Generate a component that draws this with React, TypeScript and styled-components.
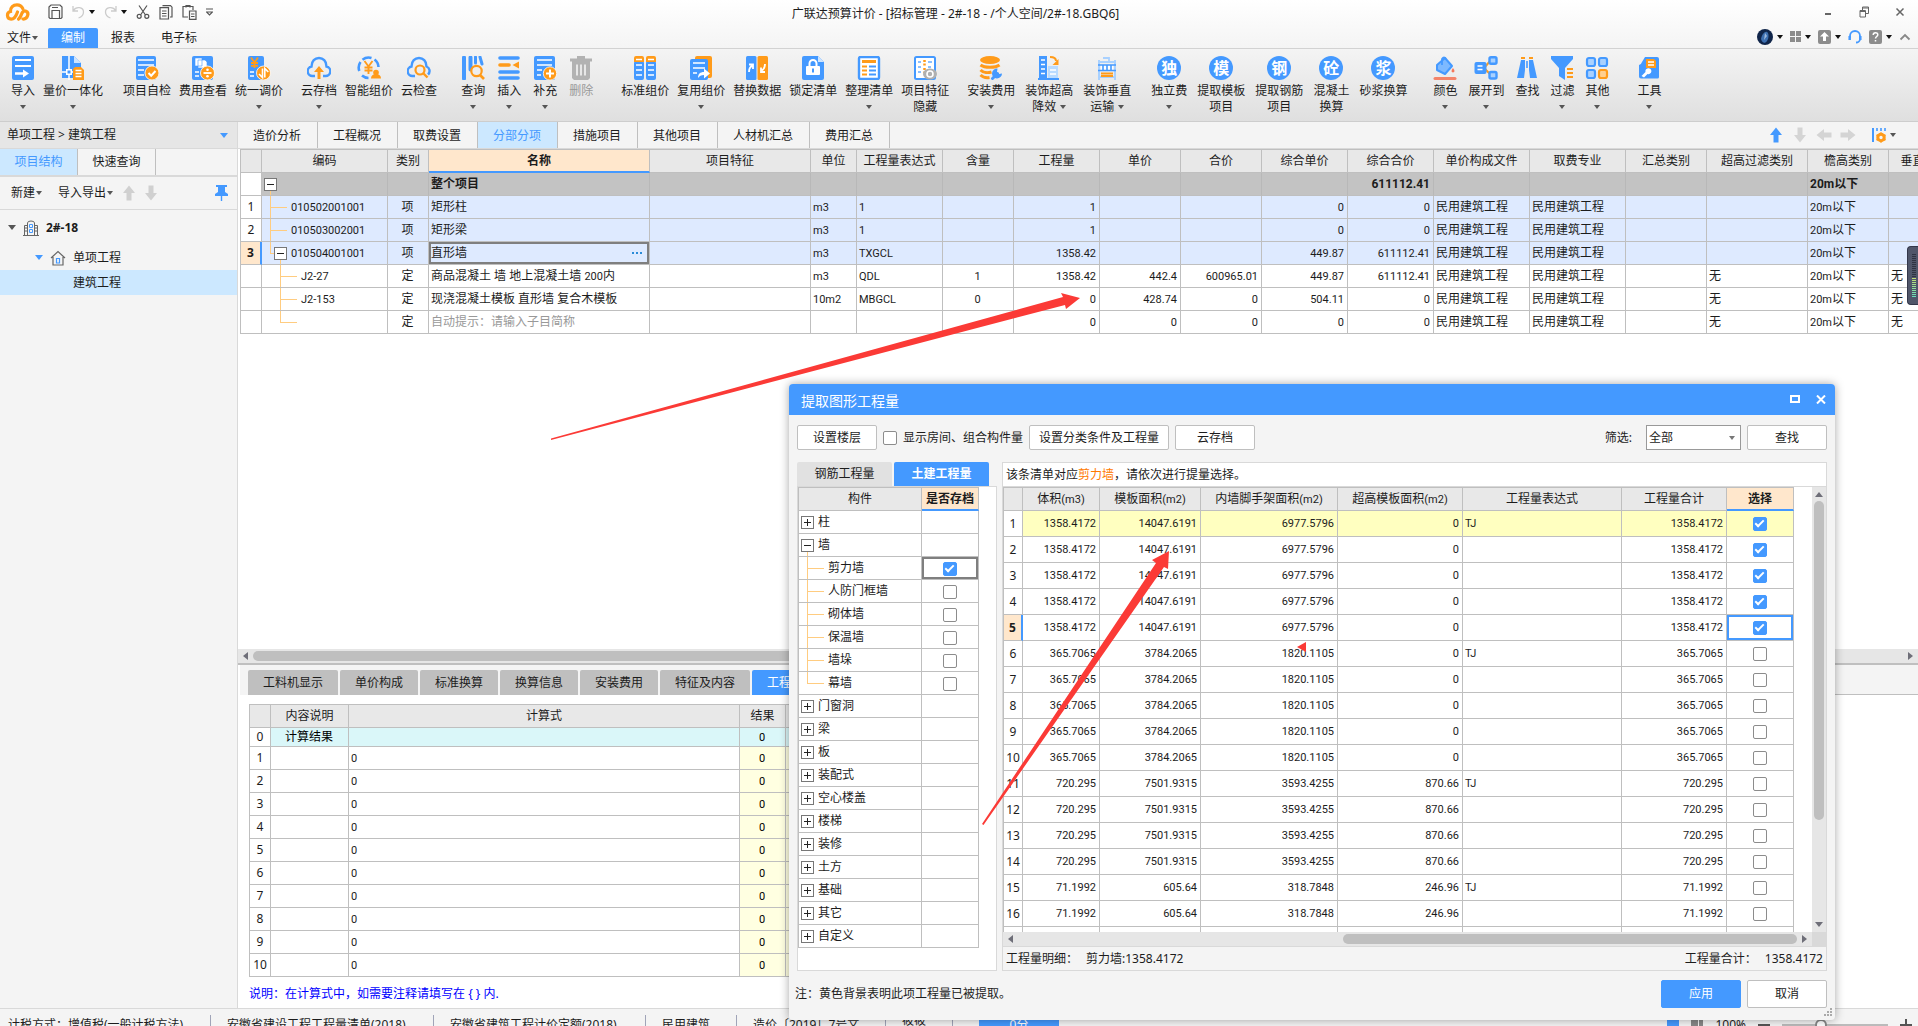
import React from "react";
import styled, { createGlobalStyle, css } from "styled-components";

const BLUE = "#4499ff";
const ORANGE = "#ff9b1a";
const LINE = "#bfbfbf";
const SOFT = "#d9d9d9";
const PEACH = "#ffe7cc";
const SKY = "#cce8ff";
const PANEL = "#f4f4f4";

const GlobalStyle = createGlobalStyle`
  *, *::before, *::after { box-sizing: border-box; }
  body { margin: 0; overflow: hidden; }
  body, button, input, select, table {
    font-family: "Noto Sans", "Noto Sans CJK SC", sans-serif;
    font-size: 12px;
    line-height: 16px;
    color: #1c1c1c;
  }
  button { border: 0; padding: 0; background: none; white-space: nowrap; }
  svg { display: block; flex: none; }
`;

/* ---------- shared pieces ---------- */

const caretSizes = { small: [3, 4], medium: [4, 5], large: [5, 6] };

const Caret = styled.span<{
  $color?: string;
  $size?: "small" | "medium" | "large";
  $dir?: "down" | "left" | "right" | "up";
}>`
  flex: none;
  width: 0;
  height: 0;
  ${({ $color = "#555", $size = "small", $dir = "down" }) => {
    const [a, b] = caretSizes[$size];
    const side = { down: "top", up: "bottom", left: "right", right: "left" }[$dir];
    const cross = $dir === "down" || $dir === "up" ? ["left", "right"] : ["top", "bottom"];
    return css`
      border-${cross[0]}: ${a}px solid transparent;
      border-${cross[1]}: ${a}px solid transparent;
      border-${side}: ${b}px solid ${$color};
    `;
  }}
`;

const Latin = styled.span`
  font-family: Roboto, sans-serif;
  font-size: 11px;
`;

function mixed(text: string) {
  return text
    .split(/([\x21-\x7e]+)/)
    .filter(Boolean)
    .map((part, i) => (/^[\x21-\x7e]/.test(part) ? <Latin key={i}>{part}</Latin> : part));
}

const Check = styled.input.attrs({ type: "checkbox" })`
  appearance: none;
  flex: none;
  display: inline-grid;
  place-content: center;
  width: 14px;
  height: 14px;
  margin: 0;
  border: 1px solid #8c8c8c;
  border-radius: 2px;
  background: #fff;
  vertical-align: middle;
  &:checked {
    border-color: ${BLUE};
    background: ${BLUE};
  }
  &:checked::before {
    content: "";
    width: 9px;
    height: 5px;
    margin-bottom: 3px;
    border-left: 2px solid #fff;
    border-bottom: 2px solid #fff;
    transform: rotate(-45deg);
  }
`;

const Arrow = ({ dir, color }: { dir: number; color: string }) => (
  <svg width="16" height="16" viewBox="0 0 16 16">
    <path d="M8 0.500L14 8h-3.500v7.500h-5V8H2z" fill={color} transform={`rotate(${dir} 8 8)`} />
  </svg>
);

/* ---------- title bar ---------- */

const Page = styled.div`
  position: relative;
  display: flex;
  flex-direction: column;
  height: 100vh;
  overflow: hidden;
  background: #fff;
`;

const Head = styled.header`
  background: linear-gradient(#fff, #f4f4f4);
  border-bottom: 1px solid #d2d2d2;
`;

const TitleRow = styled.div`
  display: grid;
  grid-template-columns: 1fr auto 1fr;
  align-items: center;
  height: 28px;
  padding: 0 12px 0 5px;
`;

const QuickBar = styled.div`
  display: flex;
  align-items: center;
  gap: 9px;
  height: 24px;
  align-self: start;
`;

const Logo = styled.svg`
  margin-right: 8px;
`;

const Title = styled.h1`
  margin: 0;
  font-size: 12px;
  font-weight: 400;
`;

const WindowButtons = styled.div`
  display: flex;
  justify-content: flex-end;
  align-items: center;
  align-self: start;
  gap: 24px;
  height: 24px;
`;

const MenuRow = styled.div`
  display: flex;
  height: 20px;
  padding-right: 7px;
`;

const MenuButton = styled.button<{ $active?: boolean }>`
  padding: 0 13px;
  height: 20px;
  border-radius: 2px 2px 0 0;
  ${({ $active }) => $active && `background: ${BLUE}; color: #fff;`}
`;

const FileButton = styled.button`
  display: flex;
  align-items: center;
  gap: 1px;
  width: 48px;
  padding-left: 7px;
`;

const Tray = styled.div`
  display: flex;
  align-items: center;
  gap: 7px;
  margin-left: auto;
  height: 18px;
`;

const TrayPair = styled.button`
  display: flex;
  align-items: center;
  gap: 4px;
`;

const QuickIcon = styled.button`
  display: flex;
  align-items: center;
  gap: 4px;
`;

const stroke = { fill: "none", stroke: "#555", strokeWidth: 1.2 } as const;

function Header() {
  return (
    <Head>
      <TitleRow>
        <QuickBar>
          <Logo width="26" height="20" viewBox="0 0 26 20" fill="none" stroke={ORANGE} strokeWidth="3.200" strokeLinecap="round">
            <path d="M12.500 10c-1.500 4.500-3 7.200-6.300 7.200a3.900 3.900 0 0 1-.7-7.700C5.200 5.500 8.200 2.800 12 2.800c2.800 0 4.800 1.500 5.800 3.800" />
            <path d="M13.500 17.200c1.800-1.200 2.300-3.200 3.300-5.700 1-2.200 2.300-3 4.200-2.300 1.800.8 2.300 2.600 1.600 4.600-.8 2.200-2.600 3.400-4.600 3.200" />
          </Logo>
          <QuickIcon aria-label="保存">
            <svg width="15" height="16" viewBox="0 0 15 16" {...stroke}>
              <path d="M1 3l2-2h9l2 2v10.500l-1 1H2l-1-1zM4 14V6.500h7.500V14M4 3.500h6" />
            </svg>
          </QuickIcon>
          <QuickIcon aria-label="撤销">
            <svg width="13" height="14" viewBox="0 0 13 14" fill="none" stroke="#ccc" strokeWidth="1.300">
              <path d="M1 1v5h5M1.500 5.500C4 1 11.500 2 11.500 7c0 3-2 5-5 6" />
            </svg>
            <Caret $color="#111" />
          </QuickIcon>
          <QuickIcon aria-label="重做">
            <svg width="13" height="14" viewBox="0 0 13 14" fill="none" stroke="#ccc" strokeWidth="1.300">
              <path d="M12 1v5H7M11.500 5.500C9 1 1.500 2 1.500 7c0 3 2 5 5 6" />
            </svg>
            <Caret $color="#111" />
          </QuickIcon>
          <QuickIcon aria-label="剪切">
            <svg width="14" height="14" viewBox="0 0 14 14" {...stroke}>
              <path d="M3 0.500l6.500 9.500M11 0.500L4.500 10" />
              <circle cx="3.200" cy="11.300" r="2" />
              <circle cx="10.800" cy="11.300" r="2" />
            </svg>
          </QuickIcon>
          <QuickIcon aria-label="复制">
            <svg width="14" height="15" viewBox="0 0 14 15" {...stroke}>
              <path d="M3.500 0.700h8l1.500 1.500V12h-2M1 2.700h8.500V14H1zM3 6h4.500M3 8.500h4.500M3 11h4.500" />
            </svg>
          </QuickIcon>
          <QuickIcon aria-label="粘贴">
            <svg width="15" height="16" viewBox="0 0 15 16" {...stroke}>
              <path d="M6 13H1V2.500h10V6M4 3.500v-2h4v2M7.500 7h6.500v8.300H7.500zM9 10h3.500M9 12.500h3.500" />
            </svg>
          </QuickIcon>
          <QuickIcon aria-label="更多">
            <svg width="7" height="8" viewBox="0 0 7 8" {...stroke}>
              <path d="M0 1h7M0.500 4h6L3.500 7z" />
            </svg>
          </QuickIcon>
        </QuickBar>
        <Title>广联达预算计价 - [招标管理 - 2#-18 - /个人空间/2#-18.GBQ6]</Title>
        <WindowButtons>
          <button aria-label="最小化">
            <svg width="12" height="12" viewBox="0 0 12 12"><path d="M3 7h6v2H3z" fill="#666" /></svg>
          </button>
          <button aria-label="还原">
            <svg width="12" height="12" viewBox="0 0 12 12" fill="none" stroke="#666">
              <path d="M4.500 4V1h6v6.500h-3M2 4.500h5.500V11H2zM4.500 2h6M2 5.500h5.500" />
            </svg>
          </button>
          <button aria-label="关闭">
            <svg width="12" height="12" viewBox="0 0 12 12" stroke="#666" strokeWidth="1.500"><path d="M2.500 2.500l7 7M9.500 2.500l-7 7" /></svg>
          </button>
        </WindowButtons>
      </TitleRow>
      <MenuRow>
        <FileButton>文件<Caret /></FileButton>
        <MenuButton $active>编制</MenuButton>
        <MenuButton>报表</MenuButton>
        <MenuButton>电子标</MenuButton>
        <Tray>
          <TrayPair aria-label="账户">
            <svg width="16" height="16" viewBox="0 0 16 16">
              <circle cx="8" cy="8" r="8" fill="#10254a" />
              <path d="M4 10c1-5 4-8 6-7s2 6 0 9-5 2-6-2z" fill="#3d6fb0" />
              <path d="M8 4l2 3-3 4z" fill="#9db8dc" />
            </svg>
            <Caret $color="#111" />
          </TrayPair>
          <TrayPair aria-label="布局">
            <svg width="11" height="12" viewBox="0 0 11 12" fill="#8c8c8c"><path d="M0 0h5v5H0zM6 0h5v5H6zM0 6h5v5H0zM6 6h5v5H6z" /></svg>
            <Caret $color="#111" />
          </TrayPair>
          <TrayPair aria-label="上传">
            <svg width="13" height="14" viewBox="0 0 13 14">
              <rect width="13" height="14" rx="2" fill="#8c8c8c" />
              <path d="M6.500 2L11 6.500H8V11H5V6.500H2z" fill="#fff" />
            </svg>
            <Caret $color="#111" />
          </TrayPair>
          <button aria-label="客服">
            <svg width="14" height="14" viewBox="0 0 14 14" fill="none" stroke={BLUE} strokeWidth="1.800">
              <path d="M2 8V6a5 5 0 0 1 10 0v3c0 2-2 3.500-4 3.500" />
              <path d="M1.700 6v4M12.300 6v4" strokeWidth="2.500" />
            </svg>
          </button>
          <TrayPair aria-label="帮助">
            <svg width="13" height="14" viewBox="0 0 13 14">
              <rect width="13" height="14" rx="2" fill="#8c8c8c" />
              <path d="M4.200 5c0-3 4.600-3 4.600-.3 0 1.800-2.300 1.800-2.300 3.800M6.500 10v1.500" fill="none" stroke="#fff" strokeWidth="1.500" />
            </svg>
            <Caret $color="#111" />
          </TrayPair>
          <button aria-label="收起">
            <svg width="12" height="12" viewBox="0 0 12 12" fill="none" stroke="#888" strokeWidth="1.800"><path d="M1.500 8.500L6 4l4.500 4.500" /></svg>
          </button>
        </Tray>
      </MenuRow>
    </Head>
  );
}

/* ---------- ribbon ---------- */

const RibbonBar = styled.nav`
  display: flex;
  align-items: flex-start;
  height: 73px;
  padding: 7px 0 0 11px;
  background: linear-gradient(#f4f4f4, #dfdfdf);
  border-bottom: 1px solid #cdcdcd;
`;

const RibbonGroup = styled.div<{ $gap: number; $lead: number }>`
  display: flex;
  gap: ${({ $gap }) => $gap}px;
  margin-left: ${({ $lead }) => $lead}px;
`;

const RibbonButton = styled.button<{ $muted?: boolean }>`
  display: flex;
  flex-direction: column;
  align-items: center;
  color: ${({ $muted }) => ($muted ? "#999" : "#1c1c1c")};
`;

const RibbonLabel = styled.span`
  margin-top: 3px;
`;

const RibbonFoot = styled.span`
  display: flex;
  align-items: center;
  gap: 4px;
  height: 16px;
`;

const Disc = styled.span`
  display: grid;
  place-content: center;
  width: 24px;
  height: 24px;
  border-radius: 50%;
  background: ${BLUE};
  color: #fff;
  font-size: 16px;
  font-weight: 700;
  line-height: 24px;
`;

const B = BLUE;
const O = ORANGE;
const art: Record<string, React.ReactNode> = {
  import: (
    <>
      <rect x="1" width="22" height="24" rx="2" fill={B} />
      <path d="M4 4h16M4 10h16" stroke="#fff" strokeWidth="2" />
      <path d="M4 17.500h9" stroke="#fff" strokeWidth="2.500" />
      <path d="M12 13.500l6 4-6 4z" fill="#fff" />
    </>
  ),
  integrate: (
    <>
      <path d="M1 0h12l7 7v15H1z" fill={B} />
      <path d="M13 0l7 7h-7z" fill="#cce4ff" />
      <path d="M8 0v24M1 16h13" stroke="#fff" strokeWidth="1.500" />
      <path d="M5 13h6v6H5z" fill="#fff" />
      <path d="M6.500 14.500h3v3h-3z" fill={B} />
      <path d="M14 11h6l3 3v10H12V13z" fill={O} />
      <path d="M14.500 14.500h6M14.500 17.500h6M14.500 20.500h6" stroke="#fff" strokeWidth="1.500" />
    </>
  ),
  selfcheck: (
    <>
      <rect x="1" width="20" height="24" rx="2" fill={B} />
      <path d="M3 4h16M3 9h16M3 19h6M3 14h6" stroke="#fff" strokeWidth="1.600" />
      <circle cx="17" cy="17" r="7" fill={O} stroke="#fff" strokeWidth="0.800" />
      <path d="M13.500 17l2.700 2.700L20.500 15" fill="none" stroke="#fff" strokeWidth="2" />
    </>
  ),
  fee: (
    <>
      <rect x="1" width="21" height="24" rx="2" fill={B} />
      <path d="M4 2h7v8H4zM7 4h7l2 2v6H7z" fill="#fff" stroke={B} strokeWidth="0.600" />
      <path d="M4 16h4M4 20h4" stroke="#fff" strokeWidth="1.600" />
      <circle cx="16.500" cy="17" r="7" fill={O} stroke="#fff" strokeWidth="0.800" />
      <path d="M12.500 17h8" stroke="#fff" strokeWidth="1.800" />
      <circle cx="16.500" cy="13.800" r="1.300" fill="#fff" />
      <circle cx="16.500" cy="20.200" r="1.300" fill="#fff" />
    </>
  ),
  unify: (
    <>
      <rect x="1" width="16" height="24" rx="2" fill={B} />
      <path d="M4 1.500l3.500 5 3.500-5M7.500 6v6M4 7h7M4 9.800h7" fill="none" stroke={O} strokeWidth="1.800" />
      <path d="M3 16h4M3 20h4" stroke="#fff" strokeWidth="1.600" />
      <circle cx="16.500" cy="17" r="7" fill={O} stroke="#fff" strokeWidth="0.800" />
      <path d="M15.500 12.500v9l-3.500-3.500M17.800 21.500v-9l3.500 3.500" fill="none" stroke="#fff" strokeWidth="1.600" />
    </>
  ),
  cloudup: (
    <>
      <path d="M8 20H5.500A4.800 4.800 0 0 1 4.500 10.500C4.500 5 8 2 12 2s7.500 3 7.500 8.500A4.800 4.800 0 0 1 18.500 20H16" fill="none" stroke={B} strokeWidth="2.400" />
      <path d="M12 10l5 6h-3.500v7h-3v-7H7z" fill={O} />
    </>
  ),
  smart: (
    <>
      <path d="M2.300 15A10 10 0 0 1 3.500 6M5.500 3.700A10 10 0 0 1 14.500 2M17.500 3.500A10 10 0 0 1 21.500 11M5 19.500a10 10 0 0 0 6.500 2.500" fill="none" stroke={B} strokeWidth="2.600" />
      <path d="M7.500 5l4 5.500 4-5.500M11.500 10v8M7.500 11.500h8M7.500 14.500h8" fill="none" stroke={O} strokeWidth="1.900" />
      <circle cx="19" cy="16.500" r="2.800" fill={O} />
      <path d="M14 22.500c0-3 2-4.500 5-4.500s5 1.500 5 4.500z" fill={O} />
    </>
  ),
  cloudcheck: (
    <>
      <path d="M8 20H5.500A4.800 4.800 0 0 1 4.500 10.500C4.500 5 8 2 12 2s7.500 3 7.500 8.500a4.800 4.800 0 0 1 1.500 8" fill="none" stroke={B} strokeWidth="2.400" />
      <circle cx="13" cy="14" r="4.500" fill="none" stroke={O} strokeWidth="2.200" />
      <path d="M16.500 17.500l4 4" stroke={O} strokeWidth="2.400" />
    </>
  ),
  query: (
    <>
      <path d="M3 1.500v21M9.500 1.500v12" stroke={B} strokeWidth="4" strokeLinecap="round" />
      <path d="M14.500 1v6M19 1l2 7" stroke={B} strokeWidth="3" strokeLinecap="round" />
      <circle cx="15.500" cy="15" r="5.200" fill="#eee" stroke={O} strokeWidth="2.200" />
      <path d="M19 19l4 4" stroke={O} strokeWidth="2.600" />
    </>
  ),
  insert: (
    <>
      <path d="M3 2h18M3 16h18M3 22h18" stroke={B} strokeWidth="3.600" strokeLinecap="round" />
      <path d="M3 9h9" stroke={O} strokeWidth="3.600" strokeLinecap="round" />
      <path d="M22 5.500v7L15.500 9z" fill={O} />
    </>
  ),
  add: (
    <>
      <rect x="1" width="21" height="24" rx="2" fill={B} />
      <path d="M4 4h15M4 9h15M4 14h5M4 19h4" stroke="#fff" strokeWidth="1.600" />
      <circle cx="17" cy="17.500" r="6.700" fill={O} stroke="#fff" strokeWidth="0.800" />
      <path d="M13 17.500h8M17 13.500v8" stroke="#fff" strokeWidth="2" />
    </>
  ),
  trash: (
    <>
      <path d="M1 4h22M8 1.500h8" stroke="#b2b2b2" strokeWidth="3" />
      <path d="M3 5h18v17l-2 2H5l-2-2z" fill="#b2b2b2" />
      <path d="M8 8.500v11M12 8.500v11M16 8.500v11" stroke="#f4f4f4" strokeWidth="1.600" />
    </>
  ),
  standard: (
    <>
      <rect x="1" y="5" width="10" height="19" rx="2" fill={B} />
      <rect x="13" y="5" width="10" height="19" rx="2" fill={B} />
      <path d="M1 2q0-2 2-2h6q2 0 2 2v4H1zM13 2q0-2 2-2h6q2 0 2 2v4H13z" fill={O} />
      <path d="M3 3.500h6M15 3.500h6M3 9h6M3 14h6M3 19h6M15 9h6M15 14h6M15 19h6" stroke="#fff" strokeWidth="1.600" />
    </>
  ),
  reuse: (
    <>
      <rect x="6" width="17" height="22" rx="2" fill={O} />
      <rect x="1" y="3" width="18" height="21" rx="2" fill={B} />
      <path d="M4 7h12M4 12h12M4 17h4" stroke="#fff" strokeWidth="1.600" />
      <path d="M9 22c0-4 2-6 6-6v-3.500l6 5-6 5V19c-3 0-4.500 1-6 3z" fill="#fff" />
    </>
  ),
  swap: (
    <>
      <rect x="1" width="10.500" height="24" rx="1.500" fill={B} />
      <rect x="12.500" width="10.500" height="24" rx="1.500" fill={O} />
      <path d="M4 16c0-3 1-5 3-6.500M4 8.500h4v4.500" fill="none" stroke="#fff" strokeWidth="1.800" />
      <path d="M20 8c0 3-1 5-3 6.500M20 16h-4v-4.500" fill="none" stroke="#fff" strokeWidth="1.800" />
    </>
  ),
  lock: (
    <>
      <path d="M1 2q0-2 2-2h14l6 6v16q0 2-2 2H3q-2 0-2-2z" fill={B} />
      <path d="M17 0l6 6h-6z" fill="#cce4ff" />
      <rect x="5" y="10" width="14" height="9" rx="1" fill="#fff" />
      <path d="M8.500 10V7.500a3.500 3.500 0 0 1 7 0V10" fill="none" stroke="#fff" strokeWidth="2" />
      <path d="M12 12.500v4" stroke={B} strokeWidth="2" />
    </>
  ),
  tidy: (
    <>
      <rect x="2" y="1" width="20" height="22" rx="1.500" fill="#fff" stroke={B} strokeWidth="2.400" />
      <path d="M5 5.500h14" stroke={O} strokeWidth="3" />
      <path d="M5 10.500h5M5 14.500h5M5 18.500h5" stroke={O} strokeWidth="2" />
      <path d="M12 10.500h7M12 14.500h7M12 18.500h7" stroke={B} strokeWidth="2" />
    </>
  ),
  feature: (
    <>
      <rect x="2" y="1" width="20" height="22" rx="1.500" fill="#fff" stroke={B} strokeWidth="2" />
      <path d="M5 6h3M5 11h3M5 16h3M15 6h4M15 11h3" stroke="#8cc0ff" strokeWidth="2" />
      <path d="M11.500 4v6M11.500 12v5" stroke={O} strokeWidth="2.500" strokeDasharray="2 1.500" />
      <ellipse cx="17" cy="18" rx="7" ry="5.500" fill="#b0b0b0" />
      <circle cx="17" cy="18" r="3" fill="none" stroke="#fff" strokeWidth="1.600" />
    </>
  ),
  install: (
    <>
      <ellipse cx="11" cy="4" rx="10" ry="4" fill={O} />
      <path d="M1.500 9c4 3 15 3 19 0M1.500 14c3 3 8 3 11 2M1.500 19c3 3 6 3 9 2.500" fill="none" stroke={O} strokeWidth="3" />
      <path d="M13.500 22.500l5-5" stroke={B} strokeWidth="3" strokeLinecap="round" />
      <path d="M18.500 12.500a5 5 0 1 0 4.500 5l-3 .5-2-2z" fill={B} />
    </>
  ),
  superhigh: (
    <>
      <path d="M2 0h8v24H2z" fill={B} />
      <path d="M4 4h4M4 8.500h4M4 13h4M4 17.500h4" stroke="#fff" strokeWidth="1.500" />
      <path d="M11 10h10v13H11z" fill="#b9dbff" />
      <path d="M13 14h6M13 18h6" stroke="#fff" strokeWidth="1.500" />
      <path d="M1 23h21" stroke={B} strokeWidth="2" />
      <path d="M13 1c4 0 6 2 6 4" fill="none" stroke={O} strokeWidth="2" />
      <path d="M21.500 3v6h-6z" fill={O} />
    </>
  ),
  vertical: (
    <>
      <path d="M4 4v20M20 4v20M4 6h16M4 21h16" stroke="#a9d1ff" strokeWidth="2" />
      <path d="M8 2h6v4" fill="none" stroke="#a9d1ff" strokeWidth="1.800" />
      <path d="M6 9h12v6H6z" fill="#fff" />
      <path d="M3 9h18M3 14.500h18M8 9v6M12 9v6M16 9v6" stroke={B} strokeWidth="1.600" />
      <path d="M6 17.500h12M6 20h12" stroke={O} strokeWidth="1.800" />
    </>
  ),
  color: (
    <>
      <path d="M4 9l8-7 7 8-7 8-8-4z" fill="#7db9ff" stroke={B} strokeWidth="2" strokeLinejoin="round" />
      <path d="M9 9V3q2-3 4 0" fill="none" stroke={B} strokeWidth="1.800" />
      <path d="M20 12c2 2.500 2 4 0 4.500-2-.5-2-2 0-4.500z" fill="#f4775a" />
      <path d="M2 22.500h20" stroke="#f4846a" strokeWidth="3" strokeLinecap="round" />
    </>
  ),
  expand: (
    <>
      <path d="M10 12l7-8M10 12l7 7" stroke={O} strokeWidth="2" />
      <rect x="0.500" y="6" width="12" height="12" rx="2" fill={B} />
      <path d="M3.500 10h5M3.500 13.500h5" stroke="#fff" strokeWidth="1.500" />
      <rect x="15.500" y="1.200" width="7" height="6.500" rx="1.500" fill="#a9d1ff" stroke={B} strokeWidth="2.400" />
      <rect x="15.500" y="16" width="7" height="6.500" rx="1.500" fill="#a9d1ff" stroke={B} strokeWidth="2.400" />
    </>
  ),
  find: (
    <>
      <path d="M6 4h4v10l-1 8H2zM14 4h4l4 18h-7l-1-8z" fill={B} />
      <path d="M6 2h4M14 2h4" stroke={O} strokeWidth="2" />
      <path d="M12 5v7" stroke={B} strokeWidth="1.600" />
    </>
  ),
  filter: (
    <>
      <path d="M1 0h22v3l-8 9v12l-6-4v-8L1 3z" fill={B} />
      <path d="M17 13h6M17 17h6M17 21h6" stroke={O} strokeWidth="2" />
    </>
  ),
  other: (
    <>
      {[[2, 2, B, "#a9d1ff"], [14, 2, B, "#a9d1ff"], [2, 14, B, "#a9d1ff"], [14, 14, O, "#ffcf8f"]].map(([x, y, s, f]) => (
        <rect key={`${x}-${y}`} x={x} y={y} width="8" height="8" rx="2" fill={f as string} stroke={s as string} strokeWidth="2.200" />
      ))}
    </>
  ),
  tool: (
    <>
      <path d="M2 9q2 0 3-3l3-5h12q2 0 2 2v18q0 1.500-1.500 1.500H4q-2 0-2-2z" fill={B} />
      <path d="M9 3h8l2 2v7H9z" fill={O} />
      <path d="M11 6h6M11 9h6" stroke="#fff" strokeWidth="1.400" />
      <path d="M4.500 20l4-4a3 3 0 1 1 2 2L7 21.500z" fill="#fff" />
    </>
  ),
};

type RibbonItem = { label: string; icon: string; caret?: boolean; foot?: string; muted?: boolean };
const ribbon: { gap: number; lead: number; items: RibbonItem[] }[] = [
  { gap: 8, lead: 0, items: [
    { label: "导入", icon: "import", caret: true },
    { label: "量价一体化", icon: "integrate", caret: true },
  ] },
  { gap: 8, lead: 20, items: [
    { label: "项目自检", icon: "selfcheck" },
    { label: "费用查看", icon: "fee" },
    { label: "统一调价", icon: "unify", caret: true },
  ] },
  { gap: 8, lead: 18, items: [
    { label: "云存档", icon: "cloudup", caret: true },
    { label: "智能组价", icon: "smart" },
    { label: "云检查", icon: "cloudcheck" },
  ] },
  { gap: 12, lead: 24, items: [
    { label: "查询", icon: "query", caret: true },
    { label: "插入", icon: "insert", caret: true },
    { label: "补充", icon: "add", caret: true },
    { label: "删除", icon: "trash", muted: true },
  ] },
  { gap: 8, lead: 28, items: [
    { label: "标准组价", icon: "standard" },
    { label: "复用组价", icon: "reuse", caret: true },
    { label: "替换数据", icon: "swap" },
    { label: "锁定清单", icon: "lock" },
    { label: "整理清单", icon: "tidy", caret: true },
    { label: "项目特征", icon: "feature", foot: "隐藏" },
  ] },
  { gap: 10, lead: 18, items: [
    { label: "安装费用", icon: "install", caret: true },
    { label: "装饰超高", icon: "superhigh", foot: "降效", caret: true },
    { label: "装饰垂直", icon: "vertical", foot: "运输", caret: true },
  ] },
  { gap: 10, lead: 20, items: [
    { label: "独立费", icon: "独", caret: true },
    { label: "提取模板", icon: "模", foot: "项目" },
    { label: "提取钢筋", icon: "钢", foot: "项目" },
    { label: "混凝土", icon: "砼", foot: "换算" },
    { label: "砂浆换算", icon: "浆" },
  ] },
  { gap: 11, lead: 26, items: [
    { label: "颜色", icon: "color", caret: true },
    { label: "展开到", icon: "expand", caret: true },
    { label: "查找", icon: "find" },
    { label: "过滤", icon: "filter", caret: true },
    { label: "其他", icon: "other", caret: true },
  ] },
  { gap: 8, lead: 28, items: [{ label: "工具", icon: "tool", caret: true }] },
];

function Ribbon() {
  return (
    <RibbonBar>
      {ribbon.map((group, i) => (
        <RibbonGroup key={i} $gap={group.gap} $lead={group.lead}>
          {group.items.map((item) => (
            <RibbonButton key={item.label} $muted={item.muted}>
              {art[item.icon] ? (
                <svg width="24" height="24" viewBox="0 0 24 24">{art[item.icon]}</svg>
              ) : (
                <Disc>{item.icon}</Disc>
              )}
              <RibbonLabel>{item.label}</RibbonLabel>
              <RibbonFoot>
                {item.foot}
                {item.caret && <Caret />}
              </RibbonFoot>
            </RibbonButton>
          ))}
        </RibbonGroup>
      ))}
    </RibbonBar>
  );
}

/* ---------- side panel ---------- */

const Body = styled.div`
  display: flex;
  flex: 1;
  min-height: 0;
`;

const Side = styled.aside`
  flex: none;
  width: 238px;
  background: ${PANEL};
  border-right: 1px solid ${SOFT};
  border-bottom: 1px solid ${SOFT};
`;

const Crumb = styled.div`
  display: flex;
  align-items: center;
  justify-content: space-between;
  height: 27px;
  padding: 0 9px 0 7px;
  background: #e6e6e6;
  border-bottom: 1px solid ${SOFT};
`;

const SideTabs = styled.div`
  display: flex;
  height: 28px;
  border-bottom: 2px solid ${SOFT};
`;

const SideTab = styled.button<{ $active?: boolean }>`
  width: 78px;
  border-right: 1px solid ${LINE};
  ${({ $active }) => $active && `background: ${SKY}; color: ${BLUE};`}
`;

const SideTools = styled.div`
  display: flex;
  align-items: center;
  gap: 6px;
  height: 33px;
  padding: 0 9px 0 11px;
  border-bottom: 1px solid ${SOFT};
`;

const ToolText = styled.button`
  display: flex;
  align-items: center;
  gap: 1px;
  margin-right: 10px;
  & + & { margin-right: 2px; }
`;

const Pin = styled.button`
  margin-left: auto;
`;

const TreeItem = styled.div<{ $pad: number; $height: number; $selected?: boolean; $bold?: boolean }>`
  display: flex;
  align-items: center;
  gap: 7px;
  height: ${({ $height }) => $height}px;
  padding-left: ${({ $pad }) => $pad}px;
  font-weight: ${({ $bold }) => ($bold ? 700 : 400)};
  background: ${({ $selected }) => ($selected ? SKY : "none")};
`;

function SidePanel() {
  return (
    <Side>
      <Crumb>单项工程 &gt; 建筑工程<Caret $color={BLUE} $size="medium" /></Crumb>
      <SideTabs>
        <SideTab $active>项目结构</SideTab>
        <SideTab>快速查询</SideTab>
      </SideTabs>
      <SideTools>
        <ToolText>新建<Caret /></ToolText>
        <ToolText>导入导出<Caret /></ToolText>
        <Arrow dir={0} color="#d0d0d0" />
        <Arrow dir={180} color="#d0d0d0" />
        <Pin aria-label="固定">
          <svg width="13" height="16" viewBox="0 0 13 16" fill={BLUE}><path d="M1 0h11v2h-2v5l3 2v2H7.200V16H5.800V11H0V9l3-2V2H1z" /></svg>
        </Pin>
      </SideTools>
      <TreeItem $pad={8} $height={35} $bold>
        <Caret $size="medium" />
        <svg width="16" height="16" viewBox="0 0 16 16" fill="none" stroke="#666">
          <path d="M4.500 15V3q0-2 3.500-2t3.500 2v12M4.500 5.500H1.500V15M11.500 5.500h3V15M0 15.500h16M2 8h2M2 11h2M12 8h2M12 11h2" />
          <path d="M6.500 4.500h3v3h-3zM6.500 9.500h3v3h-3z" stroke={BLUE} />
        </svg>
        2#-18
      </TreeItem>
      <TreeItem $pad={35} $height={25}>
        <Caret $size="medium" $color={BLUE} />
        <svg width="16" height="16" viewBox="0 0 16 16" fill="none" stroke="#666" strokeWidth="1.200">
          <path d="M1 8l7-6.500L15 8M3 7v8h10V7" />
          <path d="M6.500 8.500h3V13h-3z" stroke={BLUE} />
        </svg>
        单项工程
      </TreeItem>
      <TreeItem $pad={73} $height={25} $selected>建筑工程</TreeItem>
    </Side>
  );
}

/* ---------- grids ---------- */

const Grid = styled.table<{ $row: number }>`
  table-layout: fixed;
  border-collapse: separate;
  border-spacing: 0;
  width: 0;
  border-left: 1px solid ${LINE};
  border-top: 1px solid ${LINE};
  background: #fff;
  th, td {
    height: ${({ $row }) => $row}px;
    padding: 0;
    border-right: 1px solid ${LINE};
    border-bottom: 1px solid ${LINE};
    overflow: hidden;
    white-space: nowrap;
    font-weight: 400;
  }
  thead th { height: 23px; background: #e8e8e8; }
`;

const HeadCell = styled.th<{ $focus?: boolean }>`
  ${({ $focus }) => $focus && `&&& { background: ${PEACH}; font-weight: 700; border-bottom: 2px solid ${BLUE}; }`}
`;

const Row = styled.tr<{ $bg?: string; $bold?: boolean; $height?: number }>`
  && td {
    background: ${({ $bg }) => $bg ?? "#fff"};
    ${({ $bold }) => $bold && "font-weight: 700; border-right-color: #b8b8b8;"}
    ${({ $height }) => $height && `height: ${$height}px;`}
  }
  && th { ${({ $height }) => $height && `height: ${$height}px;`} }
  ${Latin} { ${({ $bold }) => $bold && "font-size: 12px;"} }
`;

const NumCell = styled.th<{ $focus?: boolean }>`
  ${({ $focus }) => $focus && `&&& { background: ${PEACH}; font-weight: 700; border-right: 2px solid ${BLUE}; }`}
`;

const Cell = styled.td<{ $align?: string; $tone?: string; $fill?: string; $frame?: string }>`
  text-align: ${({ $align }) => $align ?? "left"};
  color: ${({ $tone }) => $tone ?? "#1c1c1c"};
  &&& {
    padding: 0 3px 0 2px;
    ${({ $fill }) => $fill && `background: ${$fill};`}
    ${({ $frame }) => $frame && `box-shadow: inset 0 0 0 2px ${$frame};`}
  }
`;

const TreeCell = styled.div<{ $pad: number }>`
  display: flex;
  align-items: center;
  height: 22px;
  padding-left: ${({ $pad }) => $pad}px;
`;

const GUIDE = "#ffcc80";
const Guide = styled.span<{ $width: number; $last?: boolean }>`
  align-self: stretch;
  flex: none;
  width: ${({ $width }) => $width}px;
  background:
    linear-gradient(${GUIDE}, ${GUIDE}) left top / 1px ${({ $last }) => ($last ? "50%" : "100%")} no-repeat,
    linear-gradient(${GUIDE}, ${GUIDE}) left center / 100% 1px no-repeat;
`;

const NodeSlot = styled.span<{ $open?: boolean }>`
  display: flex;
  align-items: center;
  align-self: stretch;
  ${({ $open }) => $open && `background: linear-gradient(${GUIDE}, ${GUIDE}) center bottom / 1px 50% no-repeat;`}
`;

const NodeButton = styled.button<{ $open?: boolean }>`
  width: 13px;
  height: 13px;
  border: 1px solid #777;
  background:
    linear-gradient(#222, #222) center / 7px 1px no-repeat,
    ${({ $open }) => !$open && "linear-gradient(#222, #222) center / 1px 7px no-repeat,"}
    #fff;
`;

const NodeText = styled.span`
  margin-left: 4px;
`;

const NameLine = styled.div`
  display: flex;
  justify-content: space-between;
  padding-right: 4px;
`;

const Dots = styled.span`
  display: flex;
  align-items: center;
  gap: 2px;
  &::before, &::after, & > i {
    content: "";
    width: 2px;
    height: 2px;
    background: #2a8bd8;
  }
`;

/* ---------- main area ---------- */

const Main = styled.main`
  position: relative;
  display: flex;
  flex-direction: column;
  flex: 1;
  min-width: 0;
`;

const MainTabs = styled.div`
  display: flex;
  height: 27px;
  background: ${PANEL};
  border-bottom: 1px solid ${SOFT};
`;

const MainTab = styled.button<{ $active?: boolean }>`
  padding: 2px 16px 0 15px;
  border-right: 1px solid ${LINE};
  ${({ $active }) => $active && `background: ${SKY}; color: ${BLUE};`}
`;

const TabTools = styled.div`
  display: flex;
  align-items: center;
  gap: 8px;
  margin-left: auto;
  padding-right: 22px;
`;

const ColumnsButton = styled.button`
  display: flex;
  align-items: center;
  gap: 4px;
  margin-left: 8px;
`;

const GridArea = styled.section`
  flex: 1;
  min-height: 0;
  padding-left: 2px;
  overflow: hidden;
`;

const Track = styled.div<{ $vertical?: boolean }>`
  display: flex;
  align-items: center;
  justify-content: space-between;
  flex: none;
  flex-direction: ${({ $vertical }) => ($vertical ? "column" : "row")};
  ${({ $vertical }) => ($vertical ? "width: 14px; padding: 5px 0;" : "height: 14px; padding: 0 5px;")}
  background: #e6e6e6;
`;

const Thumb = styled.div<{ $grow: number; $vertical?: boolean }>`
  flex: ${({ $grow }) => $grow};
  border-radius: 6px;
  background: ${LINE};
  ${({ $vertical }) => ($vertical ? "width: 10px; margin: 4px 0;" : "height: 10px; margin: 0 5px;")}
`;

const Rest = styled.div<{ $grow: number }>`
  flex: ${({ $grow }) => $grow};
`;

const columns = [
  ["", 21], ["编码", 126], ["类别", 41], ["名称", 221], ["项目特征", 161], ["单位", 46], ["工程量表达式", 86],
  ["含量", 71], ["工程量", 86], ["单价", 81], ["合价", 81], ["综合单价", 86], ["综合合价", 86],
  ["单价构成文件", 96], ["取费专业", 96], ["汇总类别", 81], ["超高过滤类别", 101], ["檐高类别", 81], ["垂直运输类别", 96],
] as [string, number][];

const aligns = ["center", "left", "left", "left", "left", "center", "right", "right", "right", "right", "right"];

type BillRow = { no: string; kind: "group" | "item" | "open" | "sub" | "last"; code: string; cells: string[] };
const P = "民用建筑工程";
const bill: BillRow[] = [
  { no: "", kind: "group", code: "", cells: ["", "整个项目", "", "", "", "", "", "", "", "", "611112.41", "", "", "", "", "20m以下", ""] },
  { no: "1", kind: "item", code: "010502001001", cells: ["项", "矩形柱", "", "m3", "1", "", "1", "", "", "0", "0", P, P, "", "", "20m以下", ""] },
  { no: "2", kind: "item", code: "010503002001", cells: ["项", "矩形梁", "", "m3", "1", "", "1", "", "", "0", "0", P, P, "", "", "20m以下", ""] },
  { no: "3", kind: "open", code: "010504001001", cells: ["项", "直形墙", "", "m3", "TXGCL", "", "1358.42", "", "", "449.87", "611112.41", P, P, "", "", "20m以下", ""] },
  { no: "", kind: "sub", code: "J2-27", cells: ["定", "商品混凝土 墙 地上混凝土墙 200内", "", "m3", "QDL", "1", "1358.42", "442.4", "600965.01", "449.87", "611112.41", P, P, "", "无", "20m以下", "无"] },
  { no: "", kind: "sub", code: "J2-153", cells: ["定", "现浇混凝土模板 直形墙 复合木模板", "", "10m2", "MBGCL", "0", "0", "428.74", "0", "504.11", "0", P, P, "", "无", "20m以下", "无"] },
  { no: "", kind: "last", code: "", cells: ["定", "自动提示：请输入子目简称", "", "", "", "", "0", "0", "0", "0", "0", P, P, "", "无", "20m以下", "无"] },
];

function CodeCell({ row }: { row: BillRow }) {
  if (row.kind === "group")
    return (
      <TreeCell $pad={0}>
        <NodeSlot $open><NodeButton $open aria-label="折叠" /></NodeSlot>
      </TreeCell>
    );
  if (row.kind === "open")
    return (
      <TreeCell $pad={6}>
        <Guide $width={4} $last />
        <NodeSlot $open><NodeButton $open aria-label="折叠" /></NodeSlot>
        <NodeText>{mixed(row.code)}</NodeText>
      </TreeCell>
    );
  return (
    <TreeCell $pad={row.kind === "item" ? 6 : 16}>
      <Guide $width={17} $last={row.kind === "last"} />
      <NodeText>{mixed(row.code)}</NodeText>
    </TreeCell>
  );
}

function BillGrid() {
  return (
    <Grid $row={23}>
      <colgroup>{columns.map(([name, w], i) => <col key={name + i} style={{ width: w }} />)}</colgroup>
      <thead>
        <tr>{columns.map(([name], i) => <HeadCell key={i} $focus={name === "名称"}>{name}</HeadCell>)}</tr>
      </thead>
      <tbody>
        {bill.map((row, r) => (
          <Row key={r} $bg={r === 0 ? "#c3c3c3" : r < 4 ? "#deeaff" : "#fff"} $bold={r === 0}>
            <NumCell $focus={row.no === "3"}>{row.no}</NumCell>
            <Cell><CodeCell row={row} /></Cell>
            {row.cells.map((text, c) => (
              <Cell
                key={c}
                $align={c === 0 ? "center" : c < 5 ? "left" : aligns[c] ?? "left"}
                $tone={r === 6 && c === 1 ? "#999" : undefined}
                $frame={r === 3 && c === 1 ? "#7f7f7f" : undefined}
              >
                {r === 3 && c === 1 ? <NameLine>{text}<Dots><i /></Dots></NameLine> : mixed(text)}
              </Cell>
            ))}
          </Row>
        ))}
      </tbody>
    </Grid>
  );
}

/* ---------- lower pane ---------- */

const Lower = styled.section`
  flex: none;
  height: 346px;
  padding-left: 2px;
  border-top: 2px solid ${LINE};
  border-bottom: 1px solid ${SOFT};
`;

const LowerTabs = styled.div`
  display: flex;
  gap: 2px;
  height: 30px;
  padding: 5px 0 0 8px;
  background: ${PANEL};
`;

const LowerTab = styled.button<{ $active?: boolean }>`
  padding: 0 15px;
  border-radius: 2px 2px 0 0;
  background: ${({ $active }) => ($active ? BLUE : LINE)};
  color: ${({ $active }) => ($active ? "#fff" : "#1c1c1c")};
`;

const TabsRest = styled.div`
  flex: 1;
  border-bottom: 1px solid ${LINE};
`;

const LowerBody = styled.div`
  padding: 9px;
`;

const Remark = styled.p`
  margin: 9px 0 0;
  color: #0000ff;
`;

function LowerPane() {
  return (
    <Lower>
      <LowerTabs>
        {["工料机显示", "单价构成", "标准换算", "换算信息", "安装费用", "特征及内容", "工程量明细"].map((name, i) => (
          <LowerTab key={name} $active={i === 6}>{name}</LowerTab>
        ))}
        <TabsRest />
      </LowerTabs>
      <LowerBody>
        <Grid $row={23}>
          <colgroup>{[21, 78, 391, 46, 80].map((w, i) => <col key={i} style={{ width: w }} />)}</colgroup>
          <thead>
            <tr>{["", "内容说明", "计算式", "结果", ""].map((name, i) => <HeadCell key={i}>{name}</HeadCell>)}</tr>
          </thead>
          <tbody>
            {Array.from({ length: 11 }, (_, i) => (
              <Row key={i} $bg={i === 0 ? "#daf7f9" : "#fff"} $height={i === 0 ? 19 : 23}>
                <NumCell>{i}</NumCell>
                <Cell $align="center" $tone="#000">{i === 0 ? "计算结果" : ""}</Cell>
                <Cell>{i === 0 ? "" : mixed("0")}</Cell>
                <Cell $align="center" $tone="#000" $fill={i === 0 ? undefined : "#ffffe1"}>{mixed("0")}</Cell>
                <Cell $fill={i === 0 ? undefined : "#ffffe1"} />
              </Row>
            ))}
          </tbody>
        </Grid>
        <Remark>说明：在计算式中，如需要注释请填写在 {"{ }"} 内.</Remark>
      </LowerBody>
    </Lower>
  );
}

/* ---------- status bar ---------- */

const Status = styled.footer`
  display: flex;
  align-items: flex-start;
  flex: none;
  height: 17px;
  padding: 6px 6px 0 8px;
  background: ${PANEL};
  overflow: hidden;
`;

const StatusText = styled.span<{ $width: number }>`
  flex: none;
  width: ${({ $width }) => $width}px;
  height: 24px;
  margin-right: 16px;
  border-right: 1px solid #a0a4b8;
  line-height: 20px;
  white-space: nowrap;
`;

const Score = styled.span`
  width: 80px;
  height: 24px;
  margin: 4px 0 0 10px;
  background: ${BLUE};
  color: #fff;
  text-align: center;
  line-height: 12px;
`;

const ZoomBox = styled.div`
  display: flex;
  align-items: center;
  gap: 12px;
  height: 20px;
  margin-left: auto;
`;

const Slider = styled.input.attrs({ type: "range" })`
  appearance: none;
  width: 106px;
  height: 2px;
  margin: 0;
  background: #bbb;
  &::-webkit-slider-thumb {
    appearance: none;
    width: 12px;
    height: 12px;
    border: 2px solid #888;
    border-radius: 50%;
    background: #fff;
  }
`;

function StatusBar() {
  return (
    <Status>
      <StatusText $width={203}>计税方式：增值税(一般计税方法)</StatusText>
      <StatusText $width={207}>安徽省建设工程工程量清单(2018)</StatusText>
      <StatusText $width={196}>安徽省建筑工程计价定额(2018)</StatusText>
      <StatusText $width={75}>民用建筑</StatusText>
      <StatusText $width={133}>造价〔2019〕7号文</StatusText>
      <StatusText $width={51}>悠悠</StatusText>
      <Score>0分</Score>
      <ZoomBox>
        <svg width="12" height="12" viewBox="0 0 12 12"><rect width="12" height="12" fill={BLUE} /></svg>
        <svg width="12" height="12" viewBox="0 0 12 12" fill="#888"><path d="M0 0h7v12H0zM8 0h4v12H8z" /></svg>
        100%
        <svg width="12" height="12" viewBox="0 0 12 12"><path d="M0 5h12v2H0z" fill="#555" /></svg>
        <Slider aria-label="缩放" defaultValue={35} />
        <svg width="12" height="12" viewBox="0 0 12 12"><path d="M0 5h12v2H0zM5 0h2v12H5z" fill="#555" /></svg>
      </ZoomBox>
    </Status>
  );
}

/* ---------- dialog ---------- */

const Dialog = styled.section`
  position: absolute;
  left: 789px;
  right: 83px;
  top: 384px;
  bottom: 6px;
  display: flex;
  flex-direction: column;
  border-radius: 4px;
  background: ${PANEL};
  box-shadow: 0 0 10px rgba(0, 0, 0, 0.35);
`;

const DialogTitle = styled.div`
  display: flex;
  align-items: center;
  gap: 16px;
  height: 31px;
  padding: 0 9px 0 12px;
  border-radius: 4px 4px 0 0;
  background: ${BLUE};
`;

const DialogName = styled.h2`
  margin: 2px auto 0 0;
  font-size: 14px;
  font-weight: 400;
  color: #fff;
`;

const DialogTools = styled.div`
  display: flex;
  align-items: center;
  gap: 6px;
  padding: 10px 8px 12px;
`;

const PushButton = styled.button<{ $width?: number; $primary?: boolean; $tall?: boolean }>`
  width: ${({ $width }) => $width ?? 80}px;
  height: ${({ $tall }) => ($tall ? 28 : 25)}px;
  border: 1px solid ${({ $primary }) => ($primary ? BLUE : LINE)};
  border-radius: 2px;
  background: ${({ $primary }) => ($primary ? BLUE : "#fff")};
  color: ${({ $primary }) => ($primary ? "#fff" : "#1c1c1c")};
`;

const CheckLabel = styled.label`
  display: flex;
  align-items: center;
  gap: 6px;
`;

const FilterLabel = styled.label`
  display: flex;
  align-items: center;
  gap: 14px;
  margin-left: auto;
`;

const SelectBox = styled.span`
  display: grid;
  grid-template-columns: 1fr auto;
  align-items: center;
  width: 95px;
  height: 25px;
  padding-right: 5px;
  border: 1px solid #999;
  background: #fff;
`;

const Select = styled.select`
  appearance: none;
  width: 100%;
  padding: 0 2px;
  border: 0;
  background: none;
`;

const Columns = styled.div`
  display: flex;
  flex: 1;
  gap: 5px;
  min-height: 0;
  padding: 0 8px;
`;

const LeftCol = styled.div`
  display: flex;
  flex-direction: column;
  flex: none;
  width: 200px;
`;

const LeftTabs = styled.div`
  display: flex;
  gap: 2px;
  height: 24px;
`;

const LeftTab = styled.button<{ $active?: boolean }>`
  width: 95px;
  border-radius: 2px 2px 0 0;
  background: ${({ $active }) => ($active ? BLUE : "#e1e1e1")};
  color: ${({ $active }) => ($active ? "#fff" : "#1c1c1c")};
  font-weight: ${({ $active }) => ($active ? 700 : 400)};
`;

const Frame = styled.div`
  display: flex;
  flex-direction: column;
  flex: 1;
  min-width: 0;
  min-height: 0;
  border: 1px solid ${SOFT};
  background: #fff;
`;

const Hint = styled.div`
  flex: none;
  height: 24px;
  padding: 4px 3px 0;
  border-bottom: 1px solid ${SOFT};
`;

const Hot = styled.span`
  color: #ff7a00;
`;

const ScrollRow = styled.div`
  display: flex;
  flex: 1;
  min-height: 0;
`;

const Clip = styled.div`
  flex: 1;
  min-width: 0;
  overflow: hidden;
`;

const BottomTrack = styled.div`
  display: flex;
  flex: none;
  background: ${SOFT};
  & > :first-child { flex: 1; margin-right: 14px; }
`;

const Totals = styled.div`
  display: flex;
  align-items: center;
  gap: 8px;
  flex: none;
  height: 24px;
  padding: 0 3px;
  border-top: 1px solid ${SOFT};
  background: ${PANEL};
`;

const TotalsRight = styled.span`
  margin-left: auto;
`;

const DialogFoot = styled.div`
  display: flex;
  align-items: center;
  gap: 6px;
  height: 49px;
  padding: 0 8px 4px 6px;
`;

const FootNote = styled.span`
  margin-right: auto;
`;

const Grip = styled.svg`
  position: absolute;
  right: 3px;
  bottom: 4px;
`;

const parts: { name: string; child?: boolean; open?: boolean; last?: boolean; checked?: boolean }[] = [
  { name: "柱" },
  { name: "墙", open: true },
  { name: "剪力墙", child: true, checked: true },
  { name: "人防门框墙", child: true },
  { name: "砌体墙", child: true },
  { name: "保温墙", child: true },
  { name: "墙垛", child: true },
  { name: "幕墙", child: true, last: true },
  ...["门窗洞", "梁", "板", "装配式", "空心楼盖", "楼梯", "装修", "土方", "基础", "其它", "自定义"].map((name) => ({ name })),
];

const quantity: string[][] = Array.from({ length: 16 }, (_, i) => {
  const expr = [0, 5, 10, 14].includes(i) ? "TJ" : "";
  if (i < 5) return ["1358.4172", "14047.6191", "6977.5796", "0", expr, "1358.4172"];
  if (i < 10) return ["365.7065", "3784.2065", "1820.1105", "0", expr, "365.7065"];
  if (i < 14) return ["720.295", "7501.9315", "3593.4255", "870.66", expr, "720.295"];
  return ["71.1992", "605.64", "318.7848", "246.96", expr, "71.1992"];
});

function QuantityDialog() {
  return (
    <Dialog role="dialog" aria-label="提取图形工程量">
      <DialogTitle>
        <DialogName>提取图形工程量</DialogName>
        <button aria-label="最大化">
          <svg width="10" height="9" viewBox="0 0 10 9"><rect x="1" y="1" width="8" height="6" fill="none" stroke="#fff" strokeWidth="2" /></svg>
        </button>
        <button aria-label="关闭">
          <svg width="10" height="9" viewBox="0 0 10 9" stroke="#fff" strokeWidth="2"><path d="M1 0.500l8 8M9 0.500l-8 8" /></svg>
        </button>
      </DialogTitle>
      <DialogTools>
        <PushButton>设置楼层</PushButton>
        <CheckLabel><Check />显示房间、组合构件量</CheckLabel>
        <PushButton $width={140}>设置分类条件及工程量</PushButton>
        <PushButton>云存档</PushButton>
        <FilterLabel>
          筛选:
          <SelectBox>
            <Select defaultValue="全部"><option>全部</option></Select>
            <Caret $color="#777" />
          </SelectBox>
        </FilterLabel>
        <PushButton>查找</PushButton>
      </DialogTools>
      <Columns>
        <LeftCol>
          <LeftTabs>
            <LeftTab>钢筋工程量</LeftTab>
            <LeftTab $active>土建工程量</LeftTab>
          </LeftTabs>
          <Frame>
            <Grid $row={23}>
              <colgroup><col style={{ width: 123 }} /><col style={{ width: 57 }} /></colgroup>
              <thead><tr><HeadCell>构件</HeadCell><HeadCell $focus>是否存档</HeadCell></tr></thead>
              <tbody>
                {parts.map((part) => (
                  <Row key={part.name}>
                    <Cell>
                      {part.child ? (
                        <TreeCell $pad={6}><Guide $width={17} $last={part.last} /><NodeText>{part.name}</NodeText></TreeCell>
                      ) : (
                        <TreeCell $pad={0}>
                          <NodeSlot $open={part.open}>
                            <NodeButton $open={part.open} aria-label={part.open ? "折叠" : "展开"} />
                          </NodeSlot>
                          <NodeText>{part.name}</NodeText>
                        </TreeCell>
                      )}
                    </Cell>
                    <Cell $align="center" $frame={part.checked ? "#7f7f7f" : undefined}>
                      {part.child && <Check aria-label={part.name} defaultChecked={part.checked} />}
                    </Cell>
                  </Row>
                ))}
              </tbody>
            </Grid>
          </Frame>
        </LeftCol>
        <Frame>
          <Hint>该条清单对应<Hot>剪力墙</Hot>，请依次进行提量选择。</Hint>
          <ScrollRow>
            <Clip>
              <Grid $row={26}>
                <colgroup>{[19, 77, 101, 137, 125, 159, 105, 67].map((w, i) => <col key={i} style={{ width: w }} />)}</colgroup>
                <thead>
                  <tr>
                    {["", "体积(m3)", "模板面积(m2)", "内墙脚手架面积(m2)", "超高模板面积(m2)", "工程量表达式", "工程量合计", "选择"].map((name, i) => (
                      <HeadCell key={i} $focus={i === 7}>{mixed(name)}</HeadCell>
                    ))}
                  </tr>
                </thead>
                <tbody>
                  {quantity.map((cells, r) => (
                    <Row key={r} $bg={r === 0 ? "#ffffc0" : "#fff"}>
                      <NumCell $focus={r === 4}>{r + 1}</NumCell>
                      {cells.map((text, c) => <Cell key={c} $align={c === 4 ? "left" : "right"}>{mixed(text)}</Cell>)}
                      <Cell $align="center" $frame={r === 4 ? BLUE : undefined}>
                        <Check aria-label={`选择第${r + 1}行`} defaultChecked={r < 5} />
                      </Cell>
                    </Row>
                  ))}
                  <Row><NumCell />{columns.slice(0, 7).map((_, i) => <Cell key={i} />)}</Row>
                </tbody>
              </Grid>
            </Clip>
            <Track $vertical>
              <Caret $dir="up" $color="#6e6e78" $size="medium" />
              <Thumb $vertical $grow={316} />
              <Rest $grow={97} />
              <Caret $color="#6e6e78" $size="medium" />
            </Track>
          </ScrollRow>
          <BottomTrack>
            <Track>
              <Caret $dir="left" $color="#6e6e78" $size="medium" />
              <Rest $grow={325} />
              <Thumb $grow={455} />
              <Caret $dir="right" $color="#6e6e78" $size="medium" />
            </Track>
          </BottomTrack>
          <Totals>
            <span>工程量明细：</span>
            <span>剪力墙:1358.4172</span>
            <TotalsRight>工程量合计：</TotalsRight>
            <span>1358.4172</span>
          </Totals>
        </Frame>
      </Columns>
      <DialogFoot>
        <FootNote>注：黄色背景表明此项工程量已被提取。</FootNote>
        <PushButton $primary $tall>应用</PushButton>
        <PushButton $tall>取消</PushButton>
      </DialogFoot>
      <Grip width="8" height="8" viewBox="0 0 8 8" fill="#aaa">
        <path d="M6 0h2v2H6zM3 3h2v2H3zM6 3h2v2H6zM0 6h2v2H0zM3 6h2v2H3zM6 6h2v2H6z" />
      </Grip>
    </Dialog>
  );
}

/* ---------- overlays ---------- */

const Meter = styled.div`
  position: absolute;
  right: 0;
  top: 246px;
  display: flex;
  justify-content: flex-end;
  width: 11px;
  height: 59px;
  padding: 6px 2px 6px 0;
  border: 1px solid #33374a;
  border-right: 0;
  border-radius: 4px 0 0 4px;
  background: #50566a;
`;

const MeterBars = styled.span`
  width: 4px;
  background:
    repeating-linear-gradient(#50566a 0 1px, transparent 1px 2px),
    linear-gradient(#2f3342 55%, #c6e070 55%, #5fe0c0);
`;

const Marks = styled.svg`
  position: absolute;
  left: 0;
  top: 0;
  pointer-events: none;
`;

export default function App() {
  return (
    <Page>
      <GlobalStyle />
      <Header />
      <Ribbon />
      <Body>
        <SidePanel />
        <Main>
          <MainTabs>
            {["造价分析", "工程概况", "取费设置", "分部分项", "措施项目", "其他项目", "人材机汇总", "费用汇总"].map((name) => (
              <MainTab key={name} $active={name === "分部分项"}>{name}</MainTab>
            ))}
            <TabTools>
              <Arrow dir={0} color={BLUE} />
              <Arrow dir={180} color="#d4d4d4" />
              <Arrow dir={-90} color="#d4d4d4" />
              <Arrow dir={90} color="#d4d4d4" />
              <ColumnsButton aria-label="列设置">
                <svg width="14" height="16" viewBox="0 0 14 16">
                  <path d="M1 1v14" stroke={BLUE} strokeWidth="2" />
                  <path d="M5 1v3M9 1v3M13 1v3" stroke={BLUE} strokeWidth="1.600" />
                  <circle cx="9" cy="10.500" r="3.200" fill="none" stroke={ORANGE} strokeWidth="3" />
                  <path d="M9 5.500v2M9 13.500v2M4.500 8l2 1M13.500 8l-2 1M4.500 13l2-1M13.500 13l-2-1" stroke={ORANGE} strokeWidth="2" />
                </svg>
                <Caret />
              </ColumnsButton>
            </TabTools>
          </MainTabs>
          <GridArea><BillGrid /></GridArea>
          <Track>
            <Caret $dir="left" $color="#6e6e78" $size="medium" />
            <Thumb $grow={1400} />
            <Rest $grow={240} />
            <Caret $dir="right" $color="#6e6e78" $size="medium" />
          </Track>
          <LowerPane />
        </Main>
      </Body>
      <StatusBar />
      <QuantityDialog />
      <Meter><MeterBars /></Meter>
      <Marks width="1918" height="1026" viewBox="0 0 1918 1026" fill="#fb3a36">
        <path d="M551 438.500L1063 297l-2-4 19 5-14 11-1-4L551 440z" />
        <path d="M982 824L1156 563l-4-3 17-9-1 18-4-2L983.500 825z" />
        <path d="M1297 647l9-5v10z" />
      </Marks>
    </Page>
  );
}
